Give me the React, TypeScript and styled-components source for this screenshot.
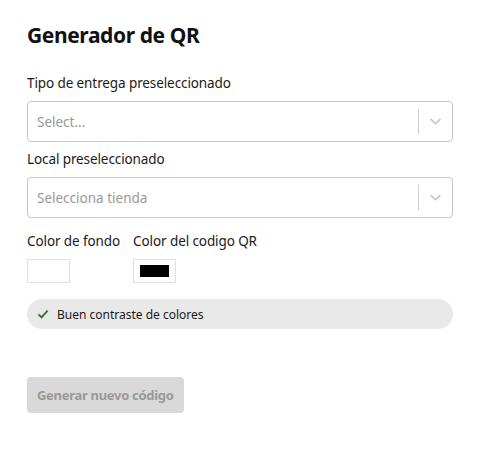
import { FC } from "react";
import styled, { createGlobalStyle } from "styled-components";

const GlobalStyle = createGlobalStyle`
    body {
        margin: 0;
        background: #ffffff;
        font-family: "Noto Sans", "Open Sans", sans-serif;
        color: #1a1a1a;
    }
`;

const Chevron: FC = () => (
    <svg width="13" height="9" viewBox="0 0 13 9">
        <path d="M1.5 2 6.5 6.6 11.5 2" fill="none" stroke="#c4c4c4" strokeWidth="1.6" />
    </svg>
);

const Check: FC = () => (
    <svg width="12" height="12" viewBox="0 0 12 12">
        <path d="M1.5 6.4 4.5 9.3 10.6 2.6" fill="none" stroke="#2e7d32" strokeWidth="2" />
    </svg>
);

const SelectBox: FC<{ placeholder: string }> = ({ placeholder }) => (
    <SelectControl>
        <Placeholder>{placeholder}</Placeholder>
        <Indicators>
            <Separator />
            <ArrowArea>
                <Chevron />
            </ArrowArea>
        </Indicators>
    </SelectControl>
);

const App: FC = () => {
    return (
        <>
            <GlobalStyle />
            <Page>
                <Title>Generador de QR</Title>
                <Field>
                    <Label>Tipo de entrega preseleccionado</Label>
                    <SelectBox placeholder="Select..." />
                </Field>
                <Field>
                    <Label>Local preseleccionado</Label>
                    <SelectBox placeholder="Selecciona tienda" />
                </Field>
                <ColorRow>
                    <ColorField>
                        <Label>Color de fondo</Label>
                        <Swatch>
                            <SwatchFill color="#ffffff" />
                        </Swatch>
                    </ColorField>
                    <ColorField>
                        <Label>Color del codigo QR</Label>
                        <Swatch>
                            <SwatchFill color="#000000" />
                        </Swatch>
                    </ColorField>
                </ColorRow>
                <ContrastPill>
                    <Check />
                    <span>Buen contraste de colores</span>
                </ContrastPill>
                <ButtonSubmit disabled>Generar nuevo código</ButtonSubmit>
            </Page>
        </>
    );
};

const Page = styled.div`
    width: 426px;
    padding: 20px 27px;
    display: flex;
    flex-direction: column;
`;

const Title = styled.h1`
    margin: 0 0 23px;
    font-size: 21px;
    font-weight: 700;
    line-height: 30px;
    letter-spacing: -0.4px;
    color: #111;
`;

const Field = styled.div`
    display: flex;
    flex-direction: column;
    margin-bottom: 7px;
`;

const Label = styled.div`
    font-size: 13.5px;
    line-height: 20px;
    margin-bottom: 8px;
    letter-spacing: -0.1px;
    color: #1a1a1a;
`;

const SelectControl = styled.div`
    box-sizing: border-box;
    height: 41px;
    border: 1px solid #c8c8c8;
    border-radius: 4px;
    display: flex;
    align-items: center;
    padding-left: 9px;
`;

const Placeholder = styled.div`
    flex: 1;
    font-size: 13.5px;
    color: #999;
`;

const Indicators = styled.div`
    display: flex;
    align-items: center;
    height: 100%;
`;

const Separator = styled.div`
    width: 1px;
    height: 25px;
    background: #cccccc;
`;

const ArrowArea = styled.div`
    width: 33px;
    display: flex;
    justify-content: center;
    align-items: center;
`;

const ColorRow = styled.div`
    display: flex;
    gap: 13px;
    margin-top: 6px;
`;

const ColorField = styled.div`
    display: flex;
    flex-direction: column;
`;

const Swatch = styled.div`
    box-sizing: border-box;
    width: 43px;
    height: 24px;
    border: 1px solid #e0e0e0;
    padding: 5px 6px;
`;

const SwatchFill = styled.div<{ color: string }>`
    width: 100%;
    height: 100%;
    background: ${(p) => p.color};
`;

const ContrastPill = styled.div`
    margin-top: 16px;
    height: 30px;
    border-radius: 15px;
    background: #e9e9e9;
    display: flex;
    align-items: center;
    gap: 8px;
    padding-left: 10px;
    font-size: 12px;
    color: #1a1a1a;
`;

const ButtonSubmit = styled.button`
    margin-top: 48px;
    align-self: flex-start;
    height: 36px;
    padding: 0 10px;
    border: none;
    border-radius: 4px;
    background: #d9d9d9;
    color: #999;
    font-family: inherit;
    font-size: 13px;
    font-weight: 700;
    letter-spacing: -0.3px;
`;

export default App;
